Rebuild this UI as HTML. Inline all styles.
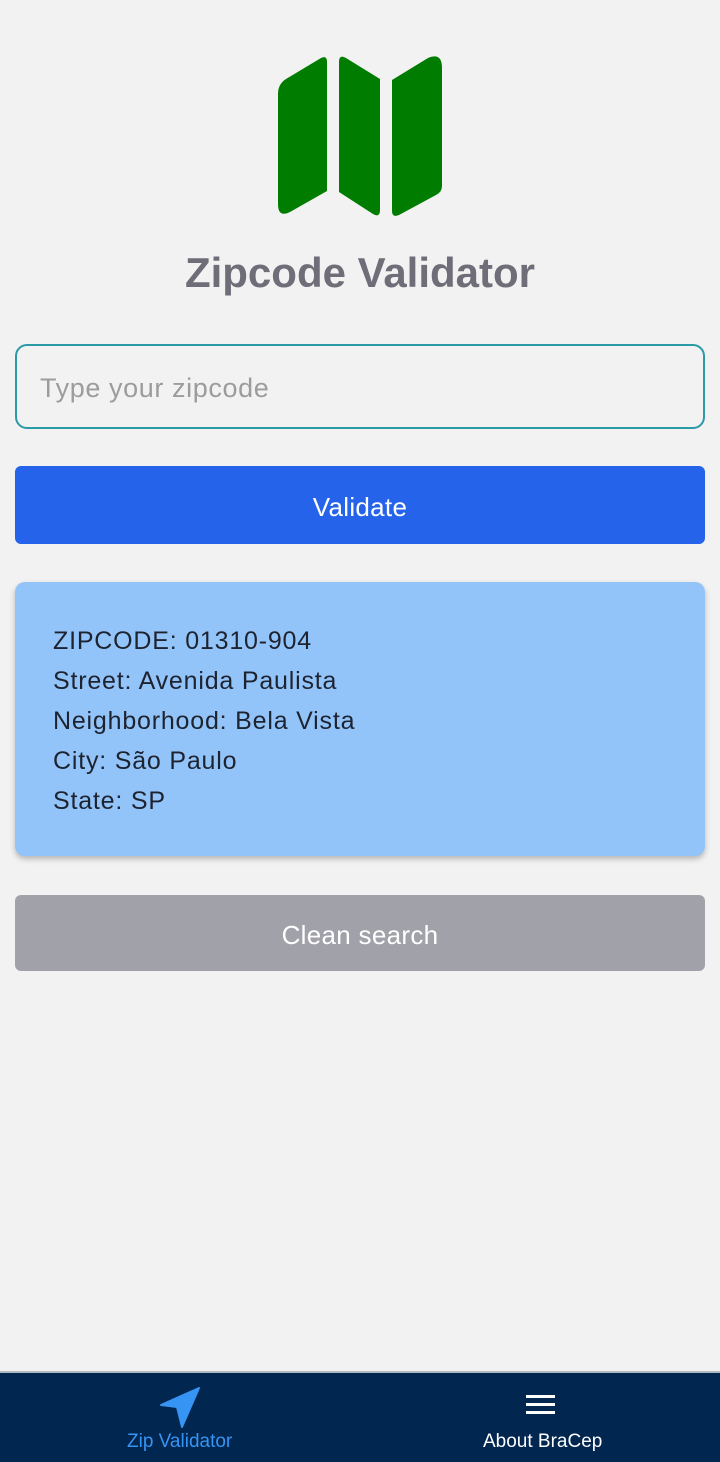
<!DOCTYPE html>
<html><head><meta charset="utf-8"><style>
body{margin:0;width:720px;height:1460px;background:#f2f2f2;font-family:"Liberation Sans",Roboto,sans-serif;position:relative;overflow:hidden}
.t{position:absolute;left:0;width:720px;top:249px;text-align:center;font-size:42px;font-weight:bold;color:#6f6e78}
.in{position:absolute;left:15px;top:344px;width:690px;height:85px;border:2px solid #2a9aa8;border-radius:12px;box-sizing:border-box}
.in span{position:absolute;left:23px;top:27px;font-size:27px;color:#9c9c9c;letter-spacing:0.6px}
.btn{position:absolute;left:15px;width:690px;border-radius:6px;color:#fff;font-size:26px;text-align:center;letter-spacing:0.3px}
.card{position:absolute;left:15px;top:582px;width:690px;height:274px;background:#92c4fa;border-radius:10px;box-shadow:0 3px 6px rgba(0,0,0,.25)}
.card div{position:absolute;left:38px;font-size:25px;color:#1e2330;letter-spacing:0.8px}
.nav{position:absolute;left:0;top:1371px;width:720px;height:89px;background:#01264f;border-top:2px solid #b0b8c0}
.nav span{position:absolute;top:58px;font-size:19px}
</style></head><body>
<svg style="position:absolute;left:0;top:0" width="720" height="240">
<path d="M327 62 Q327 55 321 58 L286 79 Q278 84 278 94 L278 204 Q278 218 290 212 L327 191 Z" fill="#007d00"/>
<path d="M339 62 Q339 54 346 58 L380 79 L380 210 Q380 218 373 214 L339 192 Z" fill="#007d00"/>
<path d="M392 80 L428 58 Q442 52 442 68 L442 186 Q442 192 436 195 L399 215 Q392 218 392 211 Z" fill="#007d00"/>
</svg>
<div class="t">Zipcode Validator</div>
<div class="in"><span>Type your zipcode</span></div>
<div class="btn" style="top:466px;height:78px;line-height:82px;background:#2563eb">Validate</div>
<div class="card">
<div style="top:45px">ZIPCODE: 01310-904</div>
<div style="top:85px">Street: Avenida Paulista</div>
<div style="top:125px">Neighborhood: Bela Vista</div>
<div style="top:165px">City: São Paulo</div>
<div style="top:205px">State: SP</div>
</div>
<div class="btn" style="top:895px;height:76px;line-height:80px;background:#a1a1aa">Clean search</div>
<div class="nav">
<svg style="position:absolute;left:0;top:0" width="720" height="60">
<path d="M199 15 L161 32 L177 34 L182 54 Z" fill="#3594f4" stroke="#3594f4" stroke-width="2" stroke-linejoin="round"/>
<rect x="526" y="22" width="29" height="3" fill="#fff"/>
<rect x="526" y="30" width="29" height="3" fill="#fff"/>
<rect x="526" y="38" width="29" height="3" fill="#fff"/>
</svg>
<span style="left:127px;color:#3594f4">Zip Validator</span>
<span style="left:483px;color:#fff">About BraCep</span>
</div>
</body></html>
